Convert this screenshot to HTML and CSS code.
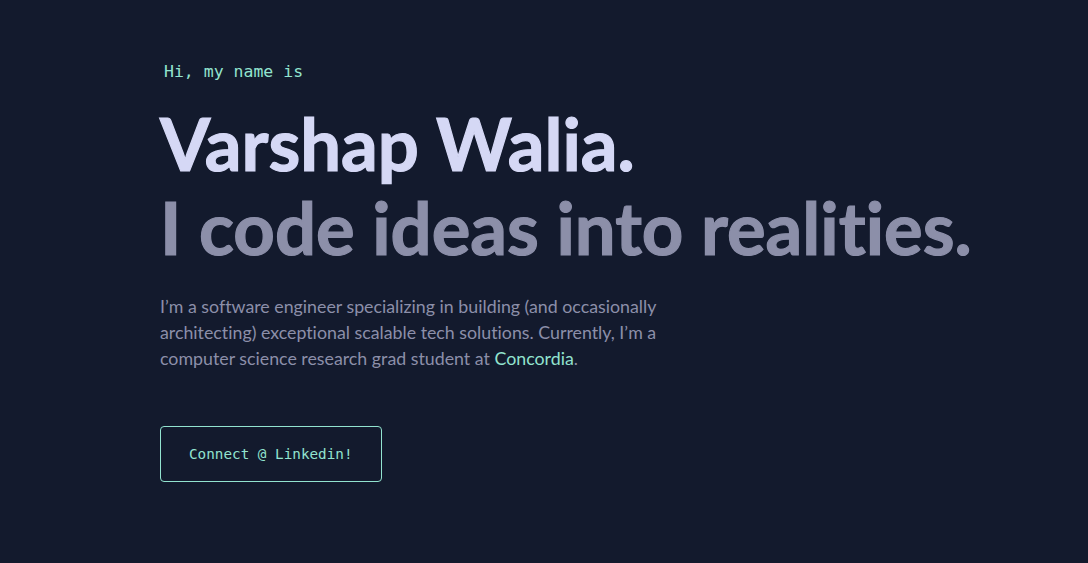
FILE: index.html
```html
<!DOCTYPE html>
<html lang="en">
<head>
<meta charset="utf-8">
<title>Varshap Walia</title>
<link rel="stylesheet" href="styles.css">
</head>
<body>
<main class="page">
  <section class="hero">
    <p class="intro">Hi, my name is</p>
    <h1 class="name">Varshap Walia.</h1>
    <h2 class="tagline">I code ideas into realities.</h2>
    <p class="about">I’m a software engineer specializing in building (and occasionally architecting) exceptional scalable tech solutions. Currently, I’m a computer science research grad student at <a class="link" href="#">Concordia</a>.</p>
    <a class="cta" href="#">Connect @ Linkedin!</a>
  </section>
</main>
</body>
</html>
```
FILE: styles.css
```css
html, body {
  margin: 0;
  padding: 0;
  background: #131a2d;
}
body {
  font-family: Lato, "Noto Sans", sans-serif;
  color: #8c8fa9;
  font-variant-ligatures: none;
}
.page {
  padding: 0 40px 0 160px;
}
.hero {
  display: flex;
  flex-direction: column;
  align-items: flex-start;
  padding-top: 60px;
}
.intro {
  margin: 0 0 17px 4px;
  font-family: "DejaVu Sans Mono", monospace;
  font-size: 16.5px;
  color: #92e3cf;
  line-height: 24px;
}
.name {
  margin: 0;
  font-size: 72.4px;
  font-weight: 700;
  line-height: 84px;
  color: #d5d8f5;
  white-space: nowrap;
  -webkit-text-stroke: 1.2px #d5d8f5;
}
.tagline {
  margin: 0;
  font-size: 72.4px;
  font-weight: 700;
  line-height: 85px;
  color: #8c8fa9;
  white-space: nowrap;
  -webkit-text-stroke: 1.2px #8c8fa9;
}
.about {
  margin: 23px 0 0;
  max-width: 520px;
  font-size: 17.8px;
  line-height: 26px;
  color: #8c8fa9;
}
.link {
  color: #92e3cf;
  text-decoration: none;
}
.cta {
  margin-top: 55px;
  display: inline-block;
  padding: 0 28px;
  height: 54px;
  line-height: 54px;
  border: 1px solid #92e3cf;
  border-radius: 4px;
  font-family: "DejaVu Sans Mono", monospace;
  font-size: 14.3px;
  color: #92e3cf;
  text-decoration: none;
}
```
